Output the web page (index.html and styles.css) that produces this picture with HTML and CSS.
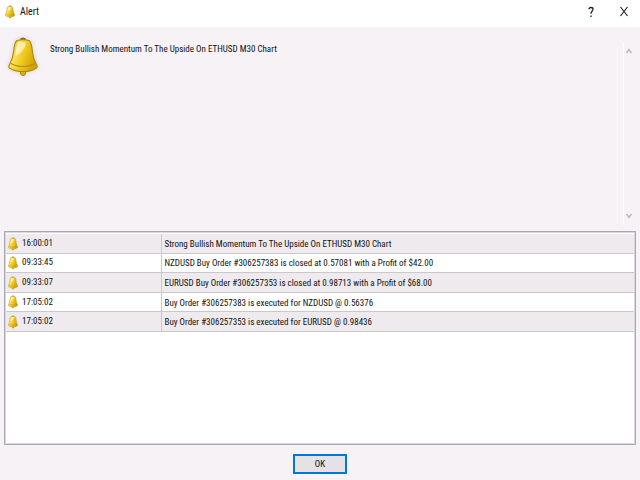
FILE: index.html
```
<!DOCTYPE html>
<html lang="en">
<head>
    <meta charset="UTF-8">
    <meta name="viewport" content="width=device-width, initial-scale=1.0">
    <title>Alert</title>
    <link rel="stylesheet" href="styles.css">
</head>
<body>
    <!-- bell shared by the title bar, the message and the log rows -->
    <svg class="defs" width="0" height="0" aria-hidden="true">
        <defs>
            <linearGradient id="gold" x1="0" y1="0" x2="1" y2="0.4">
                <stop offset="0" stop-color="#e3b814"/>
                <stop offset="0.35" stop-color="#fbe05c"/>
                <stop offset="0.6" stop-color="#f0cc1c"/>
                <stop offset="1" stop-color="#d0a40a"/>
            </linearGradient>
            <symbol id="bell" viewBox="0 0 30 40">
                <path d="M12.5 34h5v2.2q0 2.3-2.5 2.3t-2.5-2.3z" fill="#e0ae10" stroke="#a8820f"/>
                <path d="M12 3.5Q12 1 15 1t3 2.5z" fill="#8f7415" stroke="#82680f"/>
                <path d="M9 3.5Q15 2 21 3.5C23.500 5 24 10 24.500 15C25 20 26 23 28 26.500Q30 29.500 28.500 31Q24 34.500 15 34.500T1.500 31Q0 29.500 2 26.500C4 23 5 20 5.500 15C6 10 6.500 5 9 3.500Z" fill="url(#gold)" stroke="#b58b10" stroke-width="1.2"/>
                <path d="M3 26.500Q8 29.500 15 29.500T27 26.500" fill="none" stroke="#b58b0c" stroke-width="1.200"/>
                <path d="M10 6Q14 4.500 18 5.500C18 10 14 16 7.500 19C8 14 8 10 10 6Z" fill="#fff" opacity="0.55"/>
            </symbol>
        </defs>
    </svg>

    <div class="dialog">
        <header class="titlebar">
            <svg class="bell-small"><use href="#bell"/></svg>
            <h1>Alert</h1>
            <button type="button" class="caption-btn" aria-label="Help">
                <svg width="8" height="12" viewBox="0 0 8 12"><path d="M2 3.200Q2 1.500 4 1.500T6 3.200C6 5 4 5.300 4 7.800M4 9.500V11" fill="none" stroke="#222" stroke-width="1.300"/></svg>
            </button>
            <button type="button" class="caption-btn" aria-label="Close">
                <svg width="10" height="12" viewBox="0 0 10 12"><path d="M1.500 1L8.500 10M8.500 1L1.500 10" fill="none" stroke="#222" stroke-width="1.200"/></svg>
            </button>
        </header>

        <section class="message">
            <svg class="bell-large"><use href="#bell"/></svg>
            <p>Strong Bullish Momentum To The Upside On ETHUSD M30 Chart</p>
            <div class="scrollbar">
                <button type="button" aria-label="Scroll up">
                    <svg width="6" height="6" viewBox="0 0 6 6"><path d="M.5 5L3 1.500L5.500 5" fill="none" stroke="#bab8ba" stroke-width="1.500"/></svg>
                </button>
                <button type="button" aria-label="Scroll down">
                    <svg width="6" height="6" viewBox="0 0 6 6"><path d="M.5 1L3 4.500L5.500 1" fill="none" stroke="#bab8ba" stroke-width="1.500"/></svg>
                </button>
            </div>
        </section>

        <section class="log">
            <table>
                <tbody>
                    <tr>
                        <td class="time"><svg class="bell-small"><use href="#bell"/></svg>16:00:01</td>
                        <td>Strong Bullish Momentum To The Upside On ETHUSD M30 Chart</td>
                    </tr>
                    <tr>
                        <td class="time"><svg class="bell-small"><use href="#bell"/></svg>09:33:45</td>
                        <td>NZDUSD Buy Order #306257383 is closed at 0.57081 with a Profit of $42.00</td>
                    </tr>
                    <tr>
                        <td class="time"><svg class="bell-small"><use href="#bell"/></svg>09:33:07</td>
                        <td>EURUSD Buy Order #306257353 is closed at 0.98713 with a Profit of $68.00</td>
                    </tr>
                    <tr>
                        <td class="time"><svg class="bell-small"><use href="#bell"/></svg>17:05:02</td>
                        <td>Buy Order #306257383 is executed for NZDUSD @ 0.56376</td>
                    </tr>
                    <tr>
                        <td class="time"><svg class="bell-small"><use href="#bell"/></svg>17:05:02</td>
                        <td>Buy Order #306257353 is executed for EURUSD @ 0.98436</td>
                    </tr>
                </tbody>
            </table>
        </section>

        <footer class="actions">
            <button type="button" class="ok">OK</button>
        </footer>
    </div>
</body>
</html>
```
FILE: styles.css
```
* {
    box-sizing: border-box;
}
body {
    margin: 0;
    font-family: "Noto Sans Condensed", "Noto Sans ExtraCondensed", "Roboto Condensed", sans-serif;
    font-size: 9px;
    line-height: 14px;
    color: #111;
    background-color: #f6f2f6;
}
button {
    font: inherit;
    color: inherit;
    padding: 0;
    border: none;
    background: none;
}
svg {
    display: block;
}
.defs {
    position: absolute;
}
.dialog {
    display: flex;
    flex-direction: column;
    min-height: 100vh;
}
.titlebar {
    display: flex;
    align-items: center;
    height: 27px;
    padding: 0 4px 4px 5px;
    background-color: #fff;
}
.titlebar h1 {
    flex: 1;
    margin: 0 0 0 5px;
    font-size: 10px;
    font-weight: normal;
}
.caption-btn {
    display: flex;
    justify-content: center;
    width: 24px;
    margin-left: 9px;
}
.bell-small {
    width: 10px;
    height: 14px;
}
.bell-large {
    width: 30px;
    height: 40px;
    filter: drop-shadow(0 0 2px #d3d4dc);
}
.message {
    display: flex;
    align-items: flex-start;
    min-height: 204px;
    padding: 10px 5px 6px 8px;
}
.message p {
    flex: 1;
    margin: 5px 0 0 12px;
}
.scrollbar {
    display: flex;
    flex-direction: column;
    justify-content: space-between;
    align-self: stretch;
    width: 12px;
    margin-top: 5px;
    padding: 6px 2px;
    border-left: 1px solid #fff;
}
.log {
    flex: 1;
    margin: 0 4px;
    border: 1px solid #a9a7b3;
    outline: 1px solid #d9d6dd;
    outline-offset: -2px;
    padding: 2px 1px 1px;
    background-color: #fff;
}
table {
    width: 100%;
    height: 98px;
    border-collapse: collapse;
    table-layout: fixed;
}
td {
    padding: 1px 3px 0;
    border-bottom: 1px solid #cbc8cc;
}
tr:nth-child(odd) {
    background-color: #eeeaee;
}
.time {
    width: 155px;
    padding: 0 2px;
    border-right: 1px solid #cbc8cc;
}
.time .bell-small {
    display: inline-block;
    margin-right: 4px;
    vertical-align: middle;
}
.actions {
    display: flex;
    justify-content: center;
    padding: 9px 0 6px;
}
.ok {
    width: 54px;
    height: 20px;
    border: 1px solid #0078d7;
    outline: 1px solid #0078d7;
    outline-offset: -2px;
    background-color: #e5e1e5;
}
```
